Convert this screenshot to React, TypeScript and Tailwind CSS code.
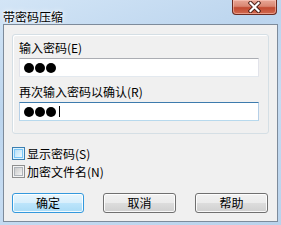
import React from 'react';

const cjk = "font-['Noto_Sans_CJK_SC','Liberation_Sans',sans-serif]";

const Dots = ({ caret }: { caret?: boolean }) => (
  <div className="flex items-center h-full pl-[4px] gap-[1px]">
    <span className="w-[10px] h-[10px] rounded-full bg-black" />
    <span className="w-[10px] h-[10px] rounded-full bg-black" />
    <span className="w-[10px] h-[10px] rounded-full bg-black" />
    {caret && <span className="ml-[2px] w-[1px] h-[11px] bg-black" />}
  </div>
);

const Checkbox = ({ label, hot }: { label: string; hot?: boolean }) => (
  <div className="flex items-center h-[13px]">
    <div
      className={`w-[13px] h-[13px] border p-[1px] ${
        hot ? 'border-[#3c7fb1] bg-[#def3fd]' : 'border-[#8f8f8f] bg-[#f4f4f4]'
      }`}
    >
      <div
        className={`w-full h-full ${
          hot
            ? 'bg-[linear-gradient(135deg,#b9dff7_0%,#d7effc_60%,#eef9ff_100%)] border border-[#79c6f9]'
            : 'bg-[linear-gradient(135deg,#cbcbcb_0%,#e2e2e2_60%,#f6f6f6_100%)] border border-[#aeb3b9]'
        }`}
      />
    </div>
    <span className="ml-[2px] text-[12px] leading-[12px] text-black">{label}</span>
  </div>
);

const Button = ({ label, primary, className }: { label: string; primary?: boolean; className?: string }) => (
  <div
    className={`h-[20px] rounded-[3px] border flex items-center justify-center text-[12px] leading-[12px] text-black shadow-[inset_0_0_0_1px_rgba(255,255,255,0.85)] ${
      primary
        ? 'border-[#3399dd] bg-[linear-gradient(#e8f6fd_0%,#d8effc_48%,#bde5fb_50%,#a9dbf6_100%)]'
        : 'border-[#707070] bg-[linear-gradient(#f2f2f2_0%,#ebebeb_48%,#dddddd_50%,#cfcfcf_100%)]'
    } ${className ?? ''}`}
  >
    {label}
  </div>
);

export default function App() {
  return (
    <div
      className={`relative w-[281px] h-[225px] overflow-hidden flex flex-col bg-[linear-gradient(160deg,#d3e5f6_0%,#bcd5ee_35%,#c6dcf2_60%,#b9d3ec_100%)] ${cjk}`}
    >
      <div className="h-[24px] pl-[3px] pt-[3px]">
        <span className="text-[12px] leading-[12px] text-black [text-shadow:0_0_6px_#fff,0_0_3px_#fff]">带密码压缩</span>
      </div>

      <div className="absolute top-0 left-[232px] w-[45px] h-[15px] rounded-b-[4px] border border-t-0 border-[#6a2b22] bg-[linear-gradient(#e9a797_0%,#d98672_45%,#c24a32_55%,#d16a4f_100%)] shadow-[inset_0_0_0_1px_rgba(255,210,200,0.5)] flex items-center justify-center">
        <svg width="13" height="12" viewBox="0 0 13 12">
          <path d="M2.5 2 L10.5 10 M10.5 2 L2.5 10" stroke="#4a1d16" strokeWidth="4" strokeLinecap="square" />
          <path d="M2.5 2 L10.5 10 M10.5 2 L2.5 10" stroke="#ffffff" strokeWidth="2.2" strokeLinecap="square" />
        </svg>
      </div>

      <div className="ml-[3px] w-[275px] h-[198px] border border-[#7d8b9b] bg-[#f0f0f0] px-[8px] flex flex-col">
        <div className="mt-[9px] w-[257px] h-[100px] rounded-[3px] border border-[#d5dfe5] shadow-[inset_1px_1px_0_#fff] pl-[6px] pt-[7px] flex flex-col">
          <div className="text-[12px] leading-[12px] text-black">输入密码(E)</div>
          <div className="mt-[4px] w-[240px] h-[19px] bg-white border border-[#e2e3ea] border-t-[#abadb3] border-b-[#e3e9ef]">
            <Dots />
          </div>
          <div className="mt-[9px] text-[12px] leading-[12px] text-black">再次输入密码以确认(R)</div>
          <div className="mt-[4px] w-[240px] h-[19px] bg-white border border-[#b5cfe7] border-t-[#3d7bad] border-b-[#b7d9ed]">
            <Dots caret />
          </div>
        </div>

        <div className="mt-[13px]">
          <Checkbox label="显示密码(S)" hot />
        </div>
        <div className="mt-[5px]">
          <Checkbox label="加密文件名(N)" />
        </div>

        <div className="mt-[15px] flex">
          <Button label="确定" primary className="w-[72px]" />
          <Button label="取消" className="ml-[19px] w-[73px]" />
          <Button label="帮助" className="ml-[19px] w-[73px]" />
        </div>
      </div>
    </div>
  );
}
